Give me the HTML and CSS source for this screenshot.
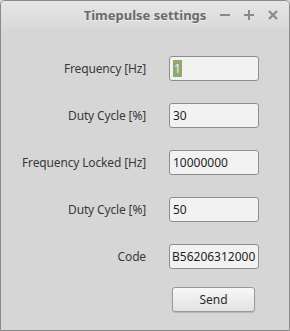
FILE: index.html
```html
<!DOCTYPE html>
<html>
<head>
<meta charset="utf-8">
<link rel="stylesheet" href="styles.css">
</head>
<body>
<div class="window">
  <div class="titlebar">
    <div class="spacer"></div>
    <div class="title">Timepulse settings</div>
    <div class="controls">
      <span class="ctl minus"><svg width="10" height="10" viewBox="0 0 10 10"><rect x="0" y="4" width="10" height="2" fill="#8a8a8a"/></svg></span>
      <span class="ctl plus"><svg width="10" height="10" viewBox="0 0 10 10"><rect x="0" y="4" width="10" height="2" fill="#8a8a8a"/><rect x="4" y="0" width="2" height="10" fill="#8a8a8a"/></svg></span>
      <span class="ctl close"><svg width="10" height="10" viewBox="0 0 10 10"><path d="M1 1 L9 9 M9 1 L1 9" stroke="#8a8a8a" stroke-width="2.2"/></svg></span>
    </div>
  </div>
  <div class="form">
    <label class="lbl">Frequency [Hz]</label>
    <div class="field"><span class="sel">1</span></div>
    <label class="lbl">Duty Cycle [%]</label>
    <div class="field">30</div>
    <label class="lbl">Frequency Locked [Hz]</label>
    <div class="field">10000000</div>
    <label class="lbl">Duty Cycle [%]</label>
    <div class="field">50</div>
    <label class="lbl">Code</label>
    <div class="field code">B56206312000</div>
  </div>
  <div class="btnwrap"><button class="btn">Send</button></div>
</div>
</body>
</html>
```
FILE: styles.css
```css
html, body {
  margin: 0;
  padding: 0;
  background: #d6d6d6;
}
.window {
  width: 290px;
  height: 331px;
  box-sizing: border-box;
  border: 1px solid #8b8b8b;
  border-radius: 5px 5px 0 0;
  background: #d6d6d6;
  font-family: "Noto Sans", "Open Sans", sans-serif;
  overflow: hidden;
}
.titlebar {
  height: 28px;
  display: grid;
  grid-template-columns: 1fr auto 1fr;
  align-items: center;
  background: linear-gradient(#e6e6e6, #d9d9d9);
}
.title {
  font-weight: bold;
  font-size: 13px;
  color: #6a6a6a;
  text-shadow: 0 1px 0 rgba(255,255,255,0.5);
}
.controls {
  display: flex;
  justify-content: flex-end;
  gap: 14px;
  padding-right: 11px;
  align-items: center;
}
.ctl {
  display: flex;
  width: 10px;
  height: 10px;
}
.form {
  display: grid;
  grid-template-columns: 145px 90px;
  column-gap: 23px;
  row-gap: 22px;
  grid-auto-rows: 25px;
  padding-top: 27px;
  align-items: center;
}
.lbl {
  text-align: right;
  font-size: 12px;
  letter-spacing: -0.15px;
  color: #3a3a3a;
}
.field {
  box-sizing: border-box;
  height: 25px;
  border: 1px solid #8e8e8e;
  border-radius: 3px;
  background: #f2f2f2;
  font-size: 12px;
  color: #1e1e1e;
  padding: 0 0 0 3px;
  line-height: 23px;
  white-space: nowrap;
  overflow: hidden;
}
.code {
  padding-left: 2px;
}
.sel {
  background: #8fa96e;
  color: #e8f4ff;
  display: inline-block;
  line-height: 17px;
  padding: 0 1px;
}
.btnwrap {
  padding: 18px 0 0 171px;
}
.btn {
  box-sizing: border-box;
  width: 83px;
  height: 25px;
  border: 1px solid #9a9a9a;
  border-radius: 3px;
  background: linear-gradient(#f8f8f8, #e2e2e2);
  box-shadow: 0 1px 1px rgba(0,0,0,0.15);
  font-family: "Noto Sans", "Open Sans", sans-serif;
  font-size: 12px;
  color: #2a2a2a;
  padding: 0;
  display: block;
}
```
